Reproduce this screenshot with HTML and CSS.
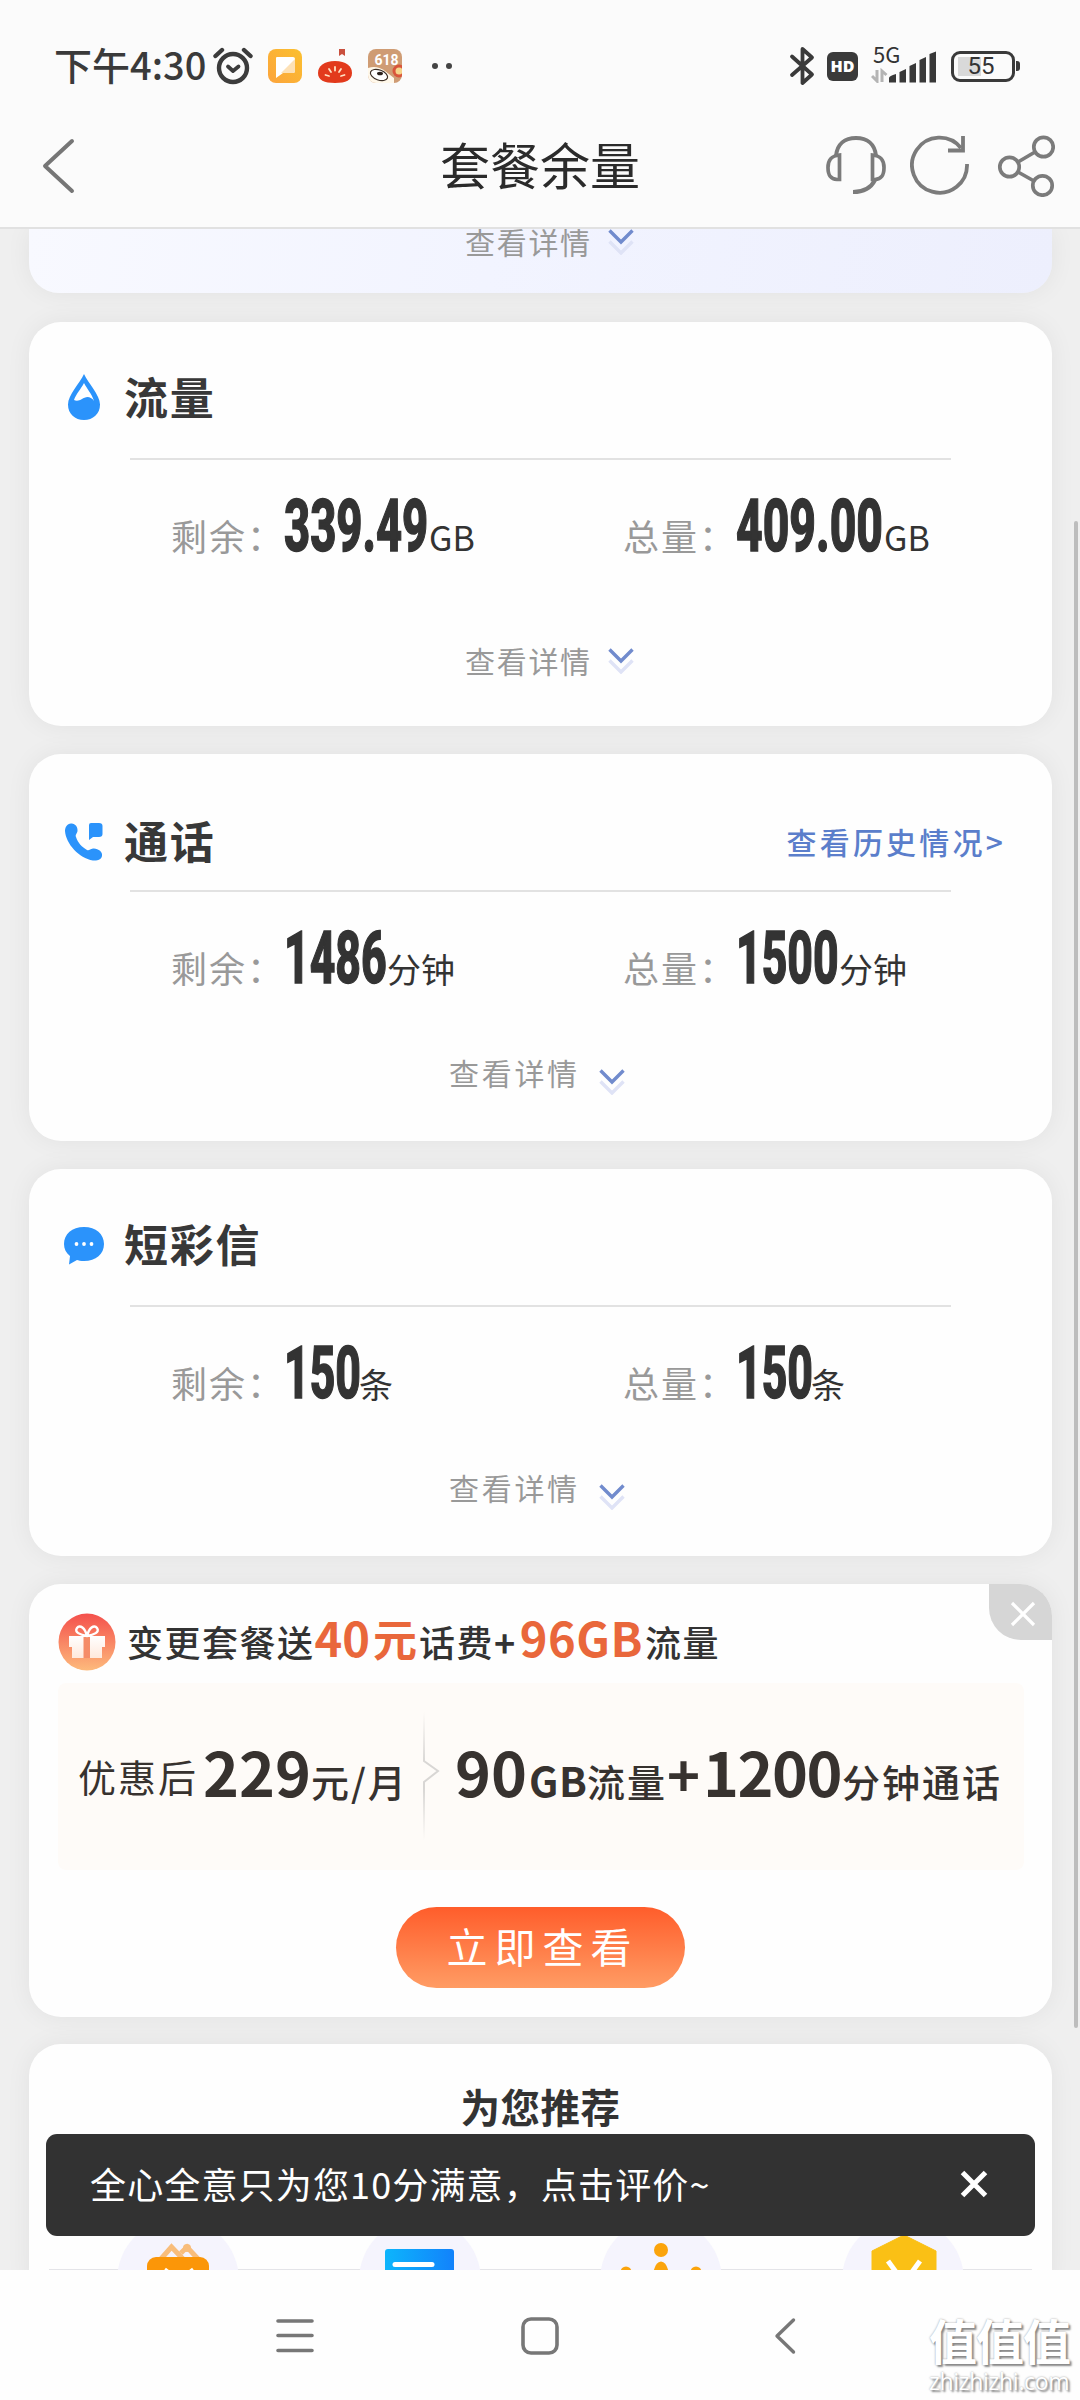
FILE: index.html
```html
<!DOCTYPE html>
<html lang="zh-CN">
<head>
<meta charset="utf-8">
<title>套餐余量</title>
<link rel="stylesheet" href="styles.css">
</head>
<body>
<div class="screen">
  <header class="top">
    <div class="status">
      <span class="clock">下午4:30</span>
      <svg class="alarm" width="40" height="38" viewBox="0 0 40 38" fill="none" stroke="#3c3c3c" stroke-linecap="round" stroke-linejoin="round"><circle cx="20" cy="21" r="14" stroke-width="4.400"/><path d="M2.500 9 L9 3 M37.500 9 L31 3" stroke-width="4.400"/><path d="M15 19.500 L20 24 L25.500 19.500" stroke-width="3.800"/></svg>
      <svg class="app" width="34" height="34" viewBox="0 0 34 34"><defs><linearGradient id="yl" x1="1" y1="0" x2="0" y2="1"><stop offset="0" stop-color="#fbc02f"/><stop offset="1" stop-color="#fca43c"/></linearGradient></defs><rect width="34" height="34" rx="8" fill="url(#yl)"/><path d="M9 8 H25 Q27 8 27 10 V22 Q27 24 25 24 H15 L8 29 V9 Q8 8 9 8Z" fill="#fff"/><path d="M27 10 V22 Q27 24 25 24 H13Z" fill="#fde1b6"/></svg>
      <svg class="app" width="34" height="34" viewBox="0 0 34 34"><path d="M21 0 H27 V7 L24 5 L21 7Z" fill="#c9503e"/><path d="M17 12 C28 12 34 17 34 24 C34 31 28 34 17 34 C6 34 0 31 0 24 C0 17 6 12 17 12Z" fill="#e23a1c"/><path d="M17 18 V21.500 M11 20 L13 23 M23 20 L21 23 M7.500 26 L11 27 M26.500 26 L23 27" stroke="#ffe3c4" stroke-width="1.800" stroke-linecap="round"/></svg>
      <svg class="app" width="34" height="34" viewBox="0 0 34 34"><defs><clipPath id="rc"><rect width="34" height="34" rx="8"/></clipPath></defs><g clip-path="url(#rc)"><rect width="34" height="34" fill="#cf9c74"/><circle cx="31" cy="22" r="6.500" fill="#d9553a"/><circle cx="31" cy="22" r="3.500" fill="#f6d489"/><path d="M0 34 V19 Q9 16 17 22 L26 29 V34Z" fill="#fff8ea"/><ellipse cx="11" cy="26" rx="9" ry="5" transform="rotate(20 11 26)" fill="#fff" stroke="#3d3028" stroke-width="1.200"/><ellipse cx="12" cy="24.500" rx="3" ry="1.800" fill="#2b211c"/><text x="6.500" y="16" class="promo">618</text></g></svg>
      <span class="dots"><i></i><i></i></span>
      <svg class="bt" width="26" height="40" viewBox="0 0 26 40" fill="none" stroke="#3a3a3a" stroke-width="3.800" stroke-linecap="round" stroke-linejoin="round"><path d="M3 10.500 L23 28.500 L13.500 37 V3 L23 11.500 L3 29"/></svg>
      <span class="hd">HD</span>
      <span class="net"><span>5G</span>
        <svg width="68" height="34" viewBox="0 0 68 34"><path d="M6 21 V32 L1 27 M11 33 V22 L15.500 26" fill="none" stroke="#b4b4b4" stroke-width="3"/><path d="M18 33.500 V29 Q18 27 25 25 V33.500Z M28.500 33.500 V23 L35 20 V33.500Z M38.500 33.500 V17 L45 14 V33.500Z M48.500 33.500 V11 L55 8 V33.500Z M58.500 33.500 V5 L65 2.500 V33.500Z" fill="#383838"/></svg></span>
      <span class="battery"><span>55</span></span><i class="tip"></i>
    </div>
    <div class="nav">
      <svg class="back" width="36" height="56" viewBox="0 0 36 56"><path d="M31 3 L4 28 L31 53" fill="none" stroke="#767676" stroke-width="4" stroke-linecap="round" stroke-linejoin="round"/></svg>
      <h1>套餐余量</h1>
      <div class="tools">
        <svg width="62" height="60" viewBox="0 0 62 60" fill="none" stroke="#7b7b7b" stroke-width="4"><path d="M11 21 C12 9 20 3 31 3 C42 3 50 9 51 21"/><path d="M14.500 20 V44.500 H12 C5 44 3 40 3 32.500 C3 25 6 21 14.500 20Z M47.500 20 V44.500 H50 C57 44 59 40 59 32.500 C59 25 56 21 47.500 20Z" stroke-width="3.700"/><path d="M50 45 C46 53 39 57 28 57"/></svg>
        <svg width="60" height="60" viewBox="0 0 60 60" fill="none" stroke="#7b7b7b" stroke-width="3.800"><path d="M57 29 A27.500 27.500 0 1 1 51 13"/><path d="M53 1 V15.500 H38"/></svg>
        <svg width="58" height="62" viewBox="0 0 58 62" fill="none" stroke="#7b7b7b" stroke-width="3.700"><circle cx="12.500" cy="32" r="9.700"/><circle cx="46.500" cy="12" r="9.700"/><circle cx="45.500" cy="50.500" r="9.700"/><path d="M21 27 L38 17 M21 37 L37 46"/></svg>
      </div>
    </div>
  </header>

  <main class="scroll">
    <section class="card lead">
      <div class="more">查看详情<svg class="chev" viewBox="0 0 26 26"><path d="M1.500 1.500 L13 13 L24.500 1.500"/><path class="soft" d="M1.500 12.500 L13 24 L24.500 12.500"/></svg></div>
    </section>

    <section class="card usage">
      <div class="head">
        <svg class="drop" width="40" height="50" viewBox="0 0 40 50"><path d="M20 2 C24 11 36 23 36 32.500 C36 42 29 48 20 48 C11 48 4 42 4 32.500 C4 23 16 11 20 2Z" fill="#2b93fb"/><path d="M20 11 C23 17 28 22 30 29 C26 23 21 25 18 27 C15 29 12 29 10 28 C12 22 17 17 20 11Z" fill="#fff"/></svg>
        <h2>流量</h2>
      </div>
      <div class="stats">
        <div class="stat"><span class="label">剩余：</span><b class="num n5"><span>339.49</span></b><span class="unit">GB</span></div>
        <div class="stat total"><span class="label">总量：</span><b class="num n5"><span>409.00</span></b><span class="unit">GB</span></div>
      </div>
      <div class="more">查看详情<svg class="chev" viewBox="0 0 26 26"><path d="M1.500 1.500 L13 13 L24.500 1.500"/><path class="soft" d="M1.500 12.500 L13 24 L24.500 12.500"/></svg></div>
    </section>

    <section class="card usage short call">
      <div class="head">
        <svg width="40" height="40" viewBox="0 0 40 40" fill="#2b93fb"><path d="M7 1.500 C11 1 14 5 13.500 9 C13 12 11 12.500 12 15 C14 21 18 25 23 28 C25 29 26 27 29 26.500 C34 26 39 30 38 34 C37 38 33 39 29 38.500 C15 36 2 22 1 9 C1 5 3 2 7 1.500Z"/><path d="M27 1 H35 Q38.500 1 38.500 4 V12 Q38.500 15 35 15 H29 L25 18 V3 Q25 1 27 1Z"/></svg>
        <h2>通话</h2>
        <a class="link">查看历史情况&gt;</a>
      </div>
      <div class="stats">
        <div class="stat"><span class="label">剩余：</span><b class="num n4"><span>1486</span></b><span class="unit">分钟</span></div>
        <div class="stat"><span class="label">总量：</span><b class="num n4"><span>1500</span></b><span class="unit">分钟</span></div>
      </div>
      <div class="more">查看详情<svg class="chev" viewBox="0 0 26 26"><path d="M1.500 1.500 L13 13 L24.500 1.500"/><path class="soft" d="M1.500 12.500 L13 24 L24.500 12.500"/></svg></div>
    </section>

    <section class="card usage short">
      <div class="head">
        <svg width="40" height="40" viewBox="0 0 40 40"><path d="M20 1 C32 1 40 8 40 18 C40 28 32 35 20 35 C17 35 14 34.500 13 34 L5 38.500 L6 30 C2 27 0 23 0 18 C0 8 8 1 20 1Z" fill="#2b93fb"/><g fill="#fff"><circle cx="12.500" cy="18" r="1.900"/><circle cx="20" cy="18" r="1.900"/><circle cx="27.500" cy="18" r="1.900"/></g></svg>
        <h2>短彩信</h2>
      </div>
      <div class="stats">
        <div class="stat"><span class="label">剩余：</span><b class="num n3"><span>150</span></b><span class="unit">条</span></div>
        <div class="stat"><span class="label">总量：</span><b class="num n3"><span>150</span></b><span class="unit">条</span></div>
      </div>
      <div class="more">查看详情<svg class="chev" viewBox="0 0 26 26"><path d="M1.500 1.500 L13 13 L24.500 1.500"/><path class="soft" d="M1.500 12.500 L13 24 L24.500 12.500"/></svg></div>
    </section>

    <section class="card offer">
      <div class="dismiss"><svg width="26" height="26" viewBox="0 0 26 26"><path d="M2 2 L24 24 M24 2 L2 24" stroke="#fff" stroke-width="3.200"/></svg></div>
      <div class="offer-title">
        <svg width="58" height="58" viewBox="0 0 58 58"><defs><linearGradient id="gf" x1="0" y1="0" x2="0" y2="1"><stop offset="0" stop-color="#f4504c"/><stop offset="1" stop-color="#fdba7c"/></linearGradient><linearGradient id="gw" x1="0" y1="0" x2="0" y2="1"><stop offset="0" stop-color="#fff"/><stop offset="1" stop-color="#ffe9dc"/></linearGradient></defs><circle cx="29" cy="29" r="28.500" fill="url(#gf)"/><path d="M11 23 H47 V34 H44 V45 H14 V34 H11Z" fill="url(#gw)"/><path d="M25.500 24 H32 V45 H25.500Z" fill="#f58c68"/><path d="M29 23 C22 22 16 19 19 15 C22 11 27 15 29 23 C31 15 36 11 39 15 C42 19 36 22 29 23Z" fill="none" stroke="#fff" stroke-width="2.400"/></svg>
        <p>变更套餐送<em>40</em><em class="yuan">元</em>话费<span class="plus">+</span><em class="o96">96GB</em>流量</p>
      </div>
      <div class="deal">
        <p class="price"><span class="light">优惠后</span><b>229</b>元<span>/</span>月</p>
        <svg width="18" height="128" viewBox="0 0 18 128"><defs><linearGradient id="sp" gradientUnits="userSpaceOnUse" x1="0" y1="0" x2="0" y2="128"><stop offset="0" stop-color="#dcdad8" stop-opacity="0"/><stop offset=".4" stop-color="#d8d6d4"/><stop offset=".6" stop-color="#d8d6d4"/><stop offset="1" stop-color="#dcdad8" stop-opacity="0"/></linearGradient></defs><path d="M2 0 V49 L16 59 L2 70 V128" fill="none" stroke="url(#sp)" stroke-width="2"/></svg>
        <p class="gain"><b>90</b><span class="gb">GB</span>流量<span class="bigplus">+</span><b class="mins">1200</b>分钟通话</p>
      </div>
      <button class="go">立即查看</button>
    </section>

    <section class="card recommend">
      <h3>为您推荐</h3>
      <div class="picks">
        <svg viewBox="0 0 122 50"><circle cx="61" cy="60" r="61" fill="#f5f4fd"/><path d="M43 40 L54.500 27 L67 40 M64 33 L70 27 L82 40" fill="none" stroke="#f8bd7b" stroke-width="5"/><circle cx="70" cy="28" r="4" fill="#f8bd7b"/><rect x="30" y="37" width="62" height="40" rx="9" fill="#fb9608"/><path d="M48 49 L52 52 M72 52 L76 49" stroke="#fff" stroke-width="3"/></svg>
        <svg viewBox="0 0 122 50"><defs><linearGradient id="bl" x1="0" x2="1"><stop offset="0" stop-color="#0db5fc"/><stop offset="1" stop-color="#1282fb"/></linearGradient></defs><circle cx="61" cy="60" r="61" fill="#f5f4fd"/><rect x="26" y="29" width="69" height="40" rx="3" fill="url(#bl)"/><path d="M36 44.500 H73" stroke="#fff" stroke-width="5" stroke-linecap="round"/></svg>
        <svg viewBox="0 0 122 50"><circle cx="61" cy="60" r="61" fill="#f5f4fd"/><g fill="#fba40c"><circle cx="61" cy="30" r="7"/><path d="M53 54 Q55 42 61 41.500 Q67 42 69 54Z"/><circle cx="26" cy="52" r="5.500"/><circle cx="96" cy="52" r="5.500"/></g></svg>
        <svg viewBox="0 0 122 50"><circle cx="61" cy="60" r="61" fill="#f5f4fd"/><path d="M62 15 L94 31 V70 H30 V31Z" fill="#fac015" stroke="#fac015" stroke-linejoin="round"/><path d="M46 41 L62 63 L78 41" fill="none" stroke="#fff" stroke-width="5"/></svg>
      </div>
    </section>
  </main>

  <div class="toast"><span>全心全意只为您10分满意，点击评价~</span><svg width="28" height="28" viewBox="0 0 28 28"><path d="M2.500 2.500 L25.500 25.500 M25.500 2.500 L2.500 25.500" stroke="#fff" stroke-width="5"/></svg></div>
  <div class="scrollbar"></div>

  <footer class="sysnav">
    <svg width="38" height="38" viewBox="0 0 38 38"><path d="M2 4 H36 M2 18.500 H36 M2 33.500 H36" stroke="#777" stroke-width="3.600" stroke-linecap="round"/></svg>
    <svg width="38" height="38" viewBox="0 0 38 38"><rect x="2" y="2" width="34" height="34" rx="8" fill="none" stroke="#777" stroke-width="3.600"/></svg>
    <svg width="22" height="38" viewBox="0 0 22 38"><path d="M19.500 3 L3 19 L19.500 35" fill="none" stroke="#777" stroke-width="3.400" stroke-linecap="round" stroke-linejoin="round"/></svg>
    <div class="mark"><strong>值值值</strong><span>zhizhizhi.com</span></div>
  </footer>
</div>
</body>
</html>
```
FILE: styles.css
```css
* { box-sizing: border-box; margin: 0; padding: 0; }
body { width: 1080px; height: 2400px; overflow: hidden; background: #efefef; color: #333; font-family: "Noto Sans CJK SC", sans-serif; }
svg { display: block; flex: none; }
em, i { font-style: normal; }
.screen { position: relative; height: 2400px; display: flex; flex-direction: column; }

.top { height: 229px; flex: none; background: #fbfbfb; border-bottom: 2px solid #e1e1e1; position: relative; z-index: 2; }
.status { height: 132px; padding-left: 54px; display: flex; align-items: center; }
.clock { width: 159px; margin-top: -4px; font-size: 38px; font-weight: 500; line-height: 50px; color: #3a3a3a; white-space: nowrap; }
.alarm { width: 40px; }
.app { margin-left: 15px; margin-right: 1px; }
.promo { font: 700 14px Roboto, sans-serif; fill: #fff; }
.dots { display: flex; gap: 8px; margin-left: 29px; }
.dots i { width: 6px; height: 6px; border-radius: 50%; background: #444; }
.bt { margin-left: 337px; }
.hd { width: 31px; height: 29px; margin-left: 12px; border-radius: 6px; background: #3a3a3a; color: #fff; font: 800 16px/29px "Open Sans", sans-serif; text-align: center; }
.net { width: 68px; height: 38px; margin-left: 13px; position: relative; padding-top: 2px; }
.net span { position: absolute; left: 2px; top: -6px; font: 22px/24px "Noto Sans CJK SC", sans-serif; }
.battery { width: 64px; height: 31px; margin-left: 12px; border: 3px solid #3a3a3a; border-radius: 9px; padding: 3px 4px; }
.battery span { display: block; height: 19px; padding-right: 4px; font: 24px/19px Roboto, sans-serif; text-align: center; background: linear-gradient(90deg, #d9d9d9 46%, transparent 46%); }
.tip { width: 4px; height: 10px; margin-left: 1px; border-radius: 0 3px 3px 0; background: #3a3a3a; }

.nav { display: grid; grid-template-columns: 1fr auto 1fr; align-items: center; height: 68px; padding: 0 25px 0 41px; }
.nav h1 { font-size: 50px; line-height: 60px; font-weight: 400; color: #2b2b2b; margin-left: -16px; margin-top: -6px; }
.tools { display: flex; justify-content: flex-end; gap: 27px; }
.tools svg:first-child { margin-right: -4px; }

.scroll { height: 2041px; flex: none; overflow: hidden; padding: 0 28px 0 29px; display: flex; flex-direction: column; gap: 28px; }
.card { flex: none; background: #fefefe; border-radius: 32px; box-shadow: 0 0 26px rgba(0, 0, 0, .06); position: relative; }
.lead { height: 64px; margin-bottom: 1px; border-radius: 0 0 30px 30px; background: linear-gradient(100deg, #f8f9ff, #f2f4ff 45%, #edeffd); }
.more { display: flex; align-items: center; height: 48px; margin-bottom: 2px; padding-left: 436px; font-size: 30px; letter-spacing: 1.700px; color: #999; }
.lead .more { margin-top: -12px; }
.chev { width: 26px; height: 26px; margin-left: 16px; margin-top: 1px; fill: none; stroke: #718bcd; stroke-width: 3.400; }
.chev .soft { stroke: #dfe3f6; }
.usage { height: 404px; }
.head { height: 138px; padding: 18px 46px 0 35px; display: flex; align-items: center; gap: 20px; position: relative; }
.head::after { content: ""; position: absolute; left: 101px; right: 101px; bottom: 0; height: 2px; background: #e2e2e2; }
.head svg { margin-top: -3px; }
.head h2 { font-size: 44px; line-height: 60px; letter-spacing: 1.800px; font-weight: 600; margin-top: -8px; color: #383838; }
.head .drop { margin-top: -7px; }
.stats { height: 80px; margin-top: 27px; display: grid; grid-template-columns: 452px 1fr; padding-left: 142px; }
.stat { display: flex; align-items: baseline; white-space: nowrap; }
.label { font-size: 36px; line-height: 40px; letter-spacing: 2px; width: 113px; color: #999; }
.num { font: 800 72px/80px Roboto, sans-serif; color: #333; }
.num span { display: inline-block; transform: scaleX(.63); transform-origin: left; -webkit-text-stroke: 1.500px #333; }
.n5 { width: 145px; }
.total .n5 { width: 148px; }
.total .n5 span { transform: scaleX(.642); }
.n4 { width: 103px; }
.n3 { width: 75px; }
.n4 span, .n3 span { transform: scaleX(.618); }
.unit { font-size: 34px; line-height: 40px; }
.usage > .more { margin-top: 69px; }
.short { height: 387px; }
.short > .more { margin-top: 49px; padding-left: 420px; letter-spacing: 2.700px; }
.short .chev { margin-top: 20px; margin-left: 19px; }
.call .head { padding-top: 41px; }
.link { margin-left: auto; margin-top: -6px; font-size: 30px; letter-spacing: 3.200px; color: #5b7ecb; font-weight: 500; }

.offer { height: 433px; padding: 28px 28px 0 29px; }
.dismiss { position: absolute; right: 0; top: 0; width: 63px; height: 56px; background: #d6d6d6; border-radius: 0 32px 0 32px; display: flex; align-items: center; justify-content: center; padding-left: 5px; padding-top: 3px; }
.offer-title { display: flex; align-items: center; height: 59px; gap: 11px; }
.offer-title p { display: flex; align-items: baseline; font-size: 36px; letter-spacing: 1.500px; font-weight: 500; line-height: 50px; white-space: nowrap; margin-top: -5px; }
.offer-title em { color: #e9673b; font-size: 47px; font-weight: 700; letter-spacing: 0; }
.offer-title .yuan { font-size: 44px; margin: 0 2px 0 3px; }
.offer-title .plus { margin-right: 3px; font-weight: 700; }
.offer-title .o96 { margin-right: 2px; letter-spacing: .5px; }
.deal { margin-top: 12px; height: 187px; border-radius: 8px; background: #fefbf8; display: flex; align-items: center; padding-left: 20px; padding-bottom: 1px; }
.deal p { display: flex; align-items: baseline; font-size: 38px; letter-spacing: 2px; line-height: 60px; font-weight: 500; color: #37322f; white-space: nowrap; }
.deal b { font-size: 61px; letter-spacing: 0; font-weight: 700; }
.deal .light { font-weight: 400; width: 125px; transform: translateY(-5px); }
.price { width: 344px; }
.gain { margin-left: 15px; }
.gb { width: 60px; padding-left: 2px; font-size: 41px; letter-spacing: .5px; font-weight: 600; }
.bigplus { width: 36px; font-size: 56px; font-weight: 700; letter-spacing: 0; }
.deal .mins { letter-spacing: -1.500px; margin-right: 1px; }
.go { display: block; width: 289px; height: 81px; margin: 37px 0 0 338px; border: 0; border-radius: 41px; background: linear-gradient(#ff5d2b, #ff9c64); color: #fff; font: 400 41px/76px "Noto Sans CJK SC", sans-serif; letter-spacing: 7px; padding: 0 0 6px 4px; }

.recommend { height: 260px; margin-top: -1px; }
.recommend h3 { margin-top: 32px; font-size: 39.500px; line-height: 60px; font-weight: 600; text-align: center; letter-spacing: .5px; }
.picks { margin: 84px 20px 0 20px; height: 50px; padding: 0 68px 0 68px; display: flex; justify-content: space-between; border-bottom: 1px solid #e4e4e8; }
.picks svg { width: 122px; height: 50px; }

.toast { position: absolute; left: 46px; top: 2134px; width: 989px; height: 102px; border-radius: 11px; background: #323232; color: #fff; display: flex; align-items: center; justify-content: space-between; padding: 0 47px 4px 44px; font-size: 36px; letter-spacing: 1.150px; }
.toast svg { margin-top: 2px; }
.scrollbar { position: absolute; left: 1074px; top: 521px; width: 4px; height: 1507px; border-radius: 2px; background: #bdbdbd; }

.sysnav { height: 130px; flex: none; background: #fefefe; display: flex; align-items: flex-start; padding: 47px 0 0 276px; }
.sysnav > svg:nth-child(2) { margin-left: 207px; }
.sysnav > svg:nth-child(3) { margin-left: 215px; }
.mark { margin-left: 133px; color: #fff; text-shadow: 2px 2px 2px #888, 0 0 2px #999; margin-top: -6px; }
.mark strong { display: block; font-size: 48px; line-height: 56px; font-weight: 700; letter-spacing: -1px; }
.mark span { display: block; font: 23px/28px "Open Sans", sans-serif; letter-spacing: -.3px; }
```
